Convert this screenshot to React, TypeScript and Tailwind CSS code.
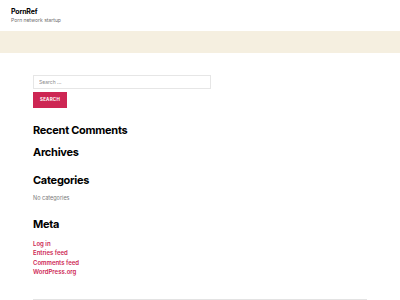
export default function App() {
  const metaLinks = ['Log in', 'Entries feed', 'Comments feed', 'WordPress.org'];

  return (
    <div className="w-[400px] h-[300px] overflow-hidden bg-white font-['Inter',sans-serif] text-black">
      {/* Header */}
      <header className="h-[31px] px-[11px] pt-[7px]">
        <div className="text-[7px] leading-[9px] font-bold tracking-tight">PornRef</div>
        <div className="mt-[1px] text-[5px] leading-[7px] text-[#6d6d6d]">Porn network startup</div>
      </header>

      {/* Band */}
      <div className="h-[22px] bg-[#f5efe0]" />

      {/* Sidebar widgets */}
      <main className="px-[33px] pt-[22px]">
        <form className="flex flex-col items-start" onSubmit={(e) => e.preventDefault()}>
          <input
            type="search"
            placeholder="Search ..."
            className="w-[178px] h-[14px] border border-[#e6e6e6] pl-[5px] text-[5px] placeholder:text-[#8a8a8a] outline-none"
          />
          <button
            type="submit"
            className="mt-[3px] w-[34px] h-[16px] bg-[#cd2653] text-white text-[4.5px] font-bold tracking-wider uppercase"
          >
            Search
          </button>
        </form>

        <h2 className="mt-[16px] text-[11px] leading-[12px] font-bold tracking-tight">Recent Comments</h2>
        <h2 className="mt-[10px] text-[11px] leading-[12px] font-bold tracking-tight">Archives</h2>
        <h2 className="mt-[16px] text-[11px] leading-[12px] font-bold tracking-tight">Categories</h2>
        <p className="mt-[9px] text-[5.5px] leading-[7px] text-[#7a7a7a]">No categories</p>
        <h2 className="mt-[16px] text-[11px] leading-[12px] font-bold tracking-tight">Meta</h2>

        <ul className="mt-[9px]">
          {metaLinks.map((link) => (
            <li key={link} className="text-[6px] leading-[9.33px] font-semibold text-[#cd2653]">
              <a href="#">{link}</a>
            </li>
          ))}
        </ul>

        <div className="mt-[23px] w-[334px] border-t-2 border-[#e3e3e3]" />
      </main>
    </div>
  );
}
